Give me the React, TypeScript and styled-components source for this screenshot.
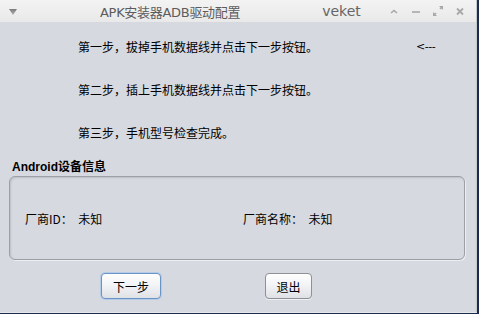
import React from 'react';
import styled, { createGlobalStyle } from 'styled-components';

const Global = createGlobalStyle`
  html, body { margin: 0; padding: 0; width: 479px; height: 314px; overflow: hidden; background: #1d2b4d; }
  #root { width: 479px; height: 314px; }
  * { box-sizing: border-box; }
`;

const cjk = `"Noto Sans CJK SC", "DejaVu Sans", sans-serif`;

const Screen = styled.div`
  display: flex;
  width: 479px;
  height: 314px;
`;

const Desktop = styled.div`
  flex: 1;
  background: #1c2a4c;
`;

const Window = styled.div`
  width: 477px;
  height: 313px;
  display: flex;
  flex-direction: column;
  background: #d6d9e0;
  border-right: 1px solid #c4c7cd;
  border-bottom: 1px solid #e6e8ec;
`;

const TitleBar = styled.div`
  height: 22px;
  flex: none;
  display: flex;
  align-items: center;
  background: linear-gradient(#f3f3f3, #e9e9e9);
  font-family: "DejaVu Sans", ${cjk};
  color: #5a5a5a;
`;

const MenuIcon = styled.svg`
  margin-left: 9px;
  width: 8px;
  height: 6px;
  margin-top: 1px;
`;

const Title = styled.div`
  margin-left: 83px;
  font-size: 13px;
  letter-spacing: -0.3px;
  font-family: "DejaVu Sans", ${cjk};
  color: #5c5c5c;
`;

const User = styled.div`
  margin-left: 82px;
  font-size: 14px;
  color: #666;
`;

const Controls = styled.div`
  margin-left: 27px;
  display: flex;
  align-items: center;
  gap: 10px;
`;

const Ctl = styled.svg`
  width: 12px;
  height: 12px;
`;

const Content = styled.div`
  display: flex;
  flex-direction: column;
  padding-top: 3px;
  font-family: ${cjk};
  font-size: 12px;
  color: #000;
`;

const StepRow = styled.div`
  height: 43px;
  display: flex;
  align-items: center;
  padding-left: 78px;
`;

const StepText = styled.div`
  flex: 1;
`;

const Arrow = styled.div`
  width: 60px;
  font-family: "DejaVu Sans", sans-serif;
  font-size: 11px;
  letter-spacing: -0.5px;
`;

const SectionTitle = styled.div`
  margin-top: 6px;
  padding-left: 12px;
  height: 15px;
  line-height: 15px;
  font-weight: bold;
  font-family: "Liberation Sans", ${cjk};
  font-size: 12px;
`;

const Panel = styled.div`
  margin: 1px 11px 0 9px;
  height: 84px;
  border: 1px solid #9c9fa5;
  border-radius: 6px;
  box-shadow: inset 1px 1px 2px rgba(0, 0, 0, 0.12), 1px 1px 0 #eceef2;
  display: grid;
  grid-template-columns: 218px 1fr;
  align-items: center;
  padding-left: 15px;
`;

const Field = styled.div`
  white-space: pre;
`;

const ButtonRow = styled.div`
  margin-top: 13px;
  display: flex;
  padding-left: 101px;
  gap: 104px;
`;

const Button = styled.button<{ $focused?: boolean; $w: number }>`
  width: ${p => p.$w}px;
  height: 26px;
  padding: 0;
  border-radius: 4px;
  border: 1px solid ${p => (p.$focused ? '#6a93c6' : '#8d9096')};
  background: linear-gradient(#fefefe, #f3f4f6 45%, #dfe1e5);
  box-shadow: ${p => (p.$focused ? '0 0 0 1px #b3cbe8' : '0 1px 0 #eef0f3')};
  font-family: ${cjk};
  font-size: 12px;
  color: #000;
`;

export default function App() {
  return (
    <>
      <Global />
      <Screen>
        <Window>
          <TitleBar>
            <MenuIcon viewBox="0 0 8 6">
              <defs>
                <linearGradient id="tg" x1="0" y1="0" x2="0" y2="1">
                  <stop offset="0" stopColor="#7a7a7a" />
                  <stop offset="1" stopColor="#b0b0b0" />
                </linearGradient>
              </defs>
              <polygon points="0,0 8,0 4,6" fill="url(#tg)" />
            </MenuIcon>
            <Title>APK安装器ADB驱动配置</Title>
            <User>veket</User>
            <Controls>
              <Ctl viewBox="0 0 12 12">
                <polyline points="3,8 6,5.5 9,8" fill="none" stroke="#a8a8a8" strokeWidth="1.6" />
              </Ctl>
              <Ctl viewBox="0 0 12 12">
                <line x1="2" y1="7" x2="10" y2="7" stroke="#a8a8a8" strokeWidth="1.6" />
              </Ctl>
              <Ctl viewBox="0 0 12 12">
                <polygon points="7,1 11,1 11,5" fill="#a8a8a8" />
                <line x1="8" y1="4" x2="10" y2="2" stroke="#a8a8a8" strokeWidth="1.4" />
                <polygon points="1,7 1,11 5,11" fill="#a8a8a8" />
                <line x1="2" y1="10" x2="4" y2="8" stroke="#a8a8a8" strokeWidth="1.4" />
              </Ctl>
              <Ctl viewBox="0 0 12 12">
                <line x1="3" y1="3.5" x2="9" y2="9.5" stroke="#a8a8a8" strokeWidth="1.8" />
                <line x1="9" y1="3.5" x2="3" y2="9.5" stroke="#a8a8a8" strokeWidth="1.8" />
              </Ctl>
            </Controls>
          </TitleBar>
          <Content>
            <StepRow>
              <StepText>第一步，拔掉手机数据线并点击下一步按钮。</StepText>
              <Arrow>&lt;---</Arrow>
            </StepRow>
            <StepRow>
              <StepText>第二步，插上手机数据线并点击下一步按钮。</StepText>
            </StepRow>
            <StepRow>
              <StepText>第三步，手机型号检查完成。</StepText>
            </StepRow>
            <SectionTitle>Android设备信息</SectionTitle>
            <Panel>
              <Field>厂商ID：  未知</Field>
              <Field>厂商名称：  未知</Field>
            </Panel>
            <ButtonRow>
              <Button $focused $w={60}>下一步</Button>
              <Button $w={47}>退出</Button>
            </ButtonRow>
          </Content>
        </Window>
        <Desktop />
      </Screen>
    </>
  );
}
